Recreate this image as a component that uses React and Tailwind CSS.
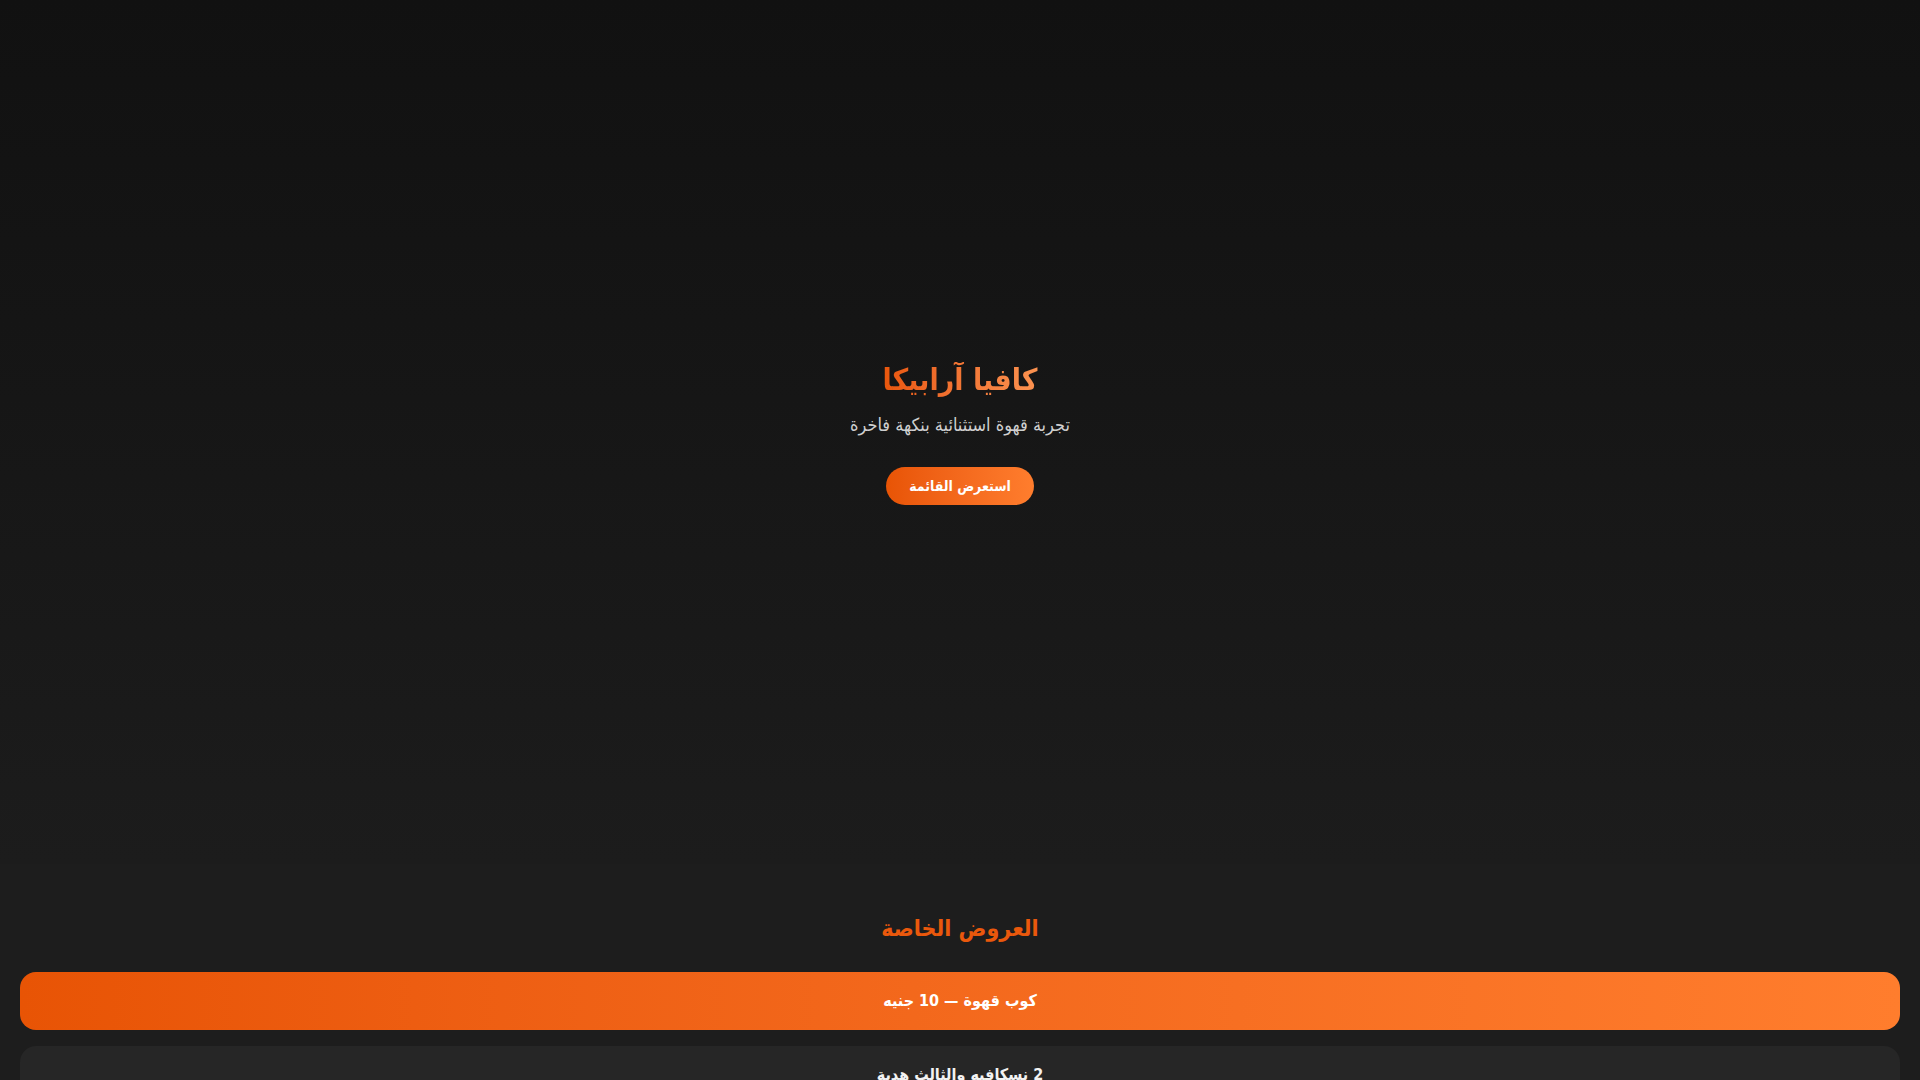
// App.jsx — café landing: dark gradient hero + special offers list (RTL).
const offers = [
  { text: "كوب قهوة — 10 جنيه", hot: true },
  { text: "2 نسكافيه والثالث هدية" },
  { text: "خصم 20% على الحلويات" },
];

export default function App() {
  return (
    <div
      dir="rtl"
      className="min-h-screen bg-[#1d1d1d] text-white"
      style={{ fontFamily: '"DejaVu Sans Condensed", "DejaVu Sans", sans-serif' }}
    >
      <section className="flex h-[864px] flex-col items-center justify-center bg-linear-to-b from-[#111111] to-[#1c1c1c] pt-[3px] text-center">
        <h1 className="mb-[13px] bg-linear-to-r from-[#e9560a] to-[#fb9250] bg-clip-text text-3xl font-bold leading-9 text-transparent">
          كافيا آرابيكا
        </h1>
        <p className="mb-7 text-lg leading-7 text-[#cfcfcf]">تجربة قهوة استثنائية بنكهة فاخرة</p>
        <a
          href="#menu"
          className="flex h-[38px] items-center rounded-full bg-linear-to-r from-[#e85405] to-[#ff7d2d] px-[23px] text-sm font-bold text-white"
        >
          استعرض القائمة
        </a>
      </section>

      <section id="offers" className="px-5 pt-12 pb-10">
        <h2 className="mb-7 text-center text-[23px] font-bold leading-8 text-[#ea580c]">العروض الخاصة</h2>
        <div className="flex flex-col gap-4">
          {offers.map((o, i) => (
            <div
              key={i}
              className={
                o.hot
                  ? "rounded-2xl bg-linear-to-r from-[#e85405] to-[#ff7d2d] py-[15px] text-center text-base font-bold leading-7 text-white"
                  : "rounded-2xl bg-[#262626] py-[15px] text-center text-base font-bold leading-7 text-[#f2f2f2]"
              }
            >
              {o.text}
            </div>
          ))}
        </div>
      </section>
    </div>
  );
}
